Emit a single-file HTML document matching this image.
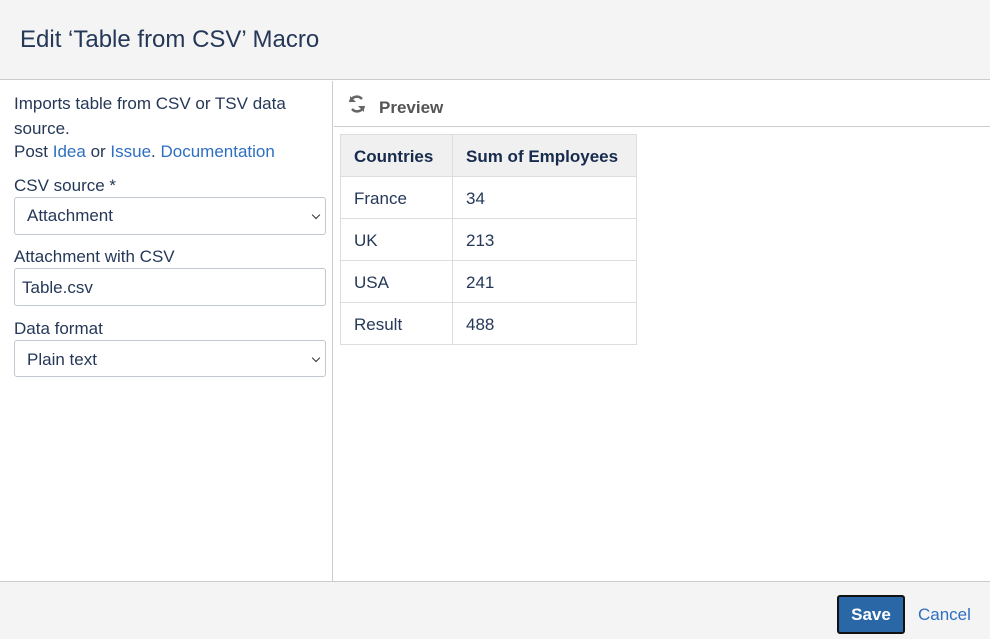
<!DOCTYPE html>
<html><head><meta charset="utf-8"><style>
*{box-sizing:border-box;margin:0;padding:0}
body{width:990px;height:639px;overflow:hidden;font-family:"Liberation Sans",sans-serif;color:#253858;background:#fff;position:relative;font-size:17px}
.hdr{position:absolute;left:0;top:0;width:990px;height:80px;background:#f4f4f4;border-bottom:1px solid #ccc}
.hdr h1{position:absolute;left:20px;top:26px;font-size:24px;font-weight:normal;color:#253858}
.left{position:absolute;left:0;top:81px;width:333px;height:500px;border-right:1px solid #ccc}
.t{position:absolute;left:14px;font-size:17px;color:#253858}
a{color:#2e6fc0;text-decoration:none}
.box{position:absolute;left:14px;width:312px;border:1px solid #c1c7d0;border-radius:3px;background:#fff;font-size:17px;padding-left:12px;color:#253858}
.box.sel::after{content:"";position:absolute;right:6px;top:14px;width:5px;height:5px;border-right:1.5px solid #333;border-bottom:1.5px solid #333;transform:rotate(45deg)}
.pv{position:absolute;left:334px;top:81px;width:656px;height:46px;border-bottom:1px solid #ccc}
.pv span{position:absolute;left:45px;top:17px;font-weight:bold;font-size:17px;color:#555}
table{position:absolute;left:340px;top:134px;border-collapse:collapse;font-size:17px}
td,th{border:1px solid #ddd;height:42px;padding:3px 13px 0;text-align:left;color:#253858}
th{background:#f0f0f0;font-weight:bold;color:#172b4d}
.ftr{position:absolute;left:0;top:581px;width:990px;height:58px;background:#f4f4f4;border-top:1px solid #ccc}
.save{position:absolute;left:837px;top:13px;width:68px;height:39px;background:#2a67a6;border:2px solid #111;border-radius:3px;color:#fff;font-weight:bold;font-size:17px;text-align:center;line-height:35px}
.cancel{position:absolute;left:918px;top:23px;font-size:17px;color:#2e6fc0}
</style></head><body>
<div class="hdr"><h1>Edit ‘Table from CSV’ Macro</h1></div>
<div class="left">
<div class="t" style="top:10px;line-height:25px">Imports table from CSV or TSV data<br>source.</div>
<div class="t" style="top:61px">Post <a>Idea</a> or <a>Issue</a>. <a>Documentation</a></div>
<div class="t" style="top:95px">CSV source *</div>
<div class="box sel" style="top:116px;height:38px;line-height:36px">Attachment</div>
<div class="t" style="top:166px">Attachment with CSV</div>
<div class="box" style="top:187px;height:38px;line-height:38px;padding-left:7px">Table.csv</div>
<div class="t" style="top:238px">Data format</div>
<div class="box sel" style="top:259px;height:37px;line-height:37px">Plain text</div>
</div>
<div class="pv"><svg style="position:absolute;left:12px;top:12px" width="22" height="22" viewBox="0 0 22 22" fill="none" stroke="#666" stroke-width="2.5"><path d="M16 6A7 7 0 0 0 4 9"/><path d="M6 16a7 7 0 0 0 12-3"/><path d="M4 3v6h6" stroke-width="0" fill="#666"/><path d="M18 19v-6h-6" stroke-width="0" fill="#666"/></svg><span>Preview</span></div>
<table>
<tr><th style="width:112px">Countries</th><th style="width:184px">Sum of Employees</th></tr>
<tr><td>France</td><td>34</td></tr>
<tr><td>UK</td><td>213</td></tr>
<tr><td>USA</td><td>241</td></tr>
<tr><td>Result</td><td>488</td></tr>
</table>
<div class="ftr"><div class="save">Save</div><div class="cancel">Cancel</div></div>
</body></html>
